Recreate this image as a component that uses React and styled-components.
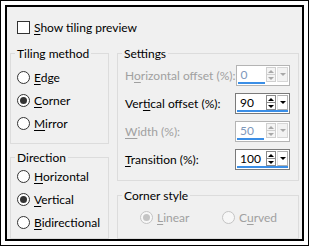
import React from "react";
import styled, { createGlobalStyle } from "styled-components";

const GlobalStyle = createGlobalStyle`
  body {
    margin: 0;
    background: #fff;
  }
`;

const Frame = styled.div`
  width: 309px;
  height: 246px;
  box-sizing: border-box;
  border: 1px solid #000;
  padding: 4px;
  background: #fff;
  font-family: Lato, "Noto Sans", sans-serif;
  font-size: 12px;
  color: #000;
`;

const Dialog = styled.div`
  height: 100%;
  box-sizing: border-box;
  border: 2px solid #000;
  background: #f0f0f0;
  padding: 14px 2px 0 3px;
  display: flex;
  flex-direction: column;
`;

const CheckRow = styled.label`
  display: flex;
  align-items: center;
  gap: 4px;
  height: 13px;
  padding-left: 7px;
  white-space: nowrap;
`;

const CheckBox = styled.span`
  width: 13px;
  height: 13px;
  box-sizing: border-box;
  border: 1px solid #333;
  background: #fff;
  flex: none;
`;

const Columns = styled.div`
  margin-top: 12px;
  display: grid;
  grid-template-columns: 99px 182px;
  column-gap: 8px;
  flex: 1;
`;

const Column = styled.div`
  display: flex;
  flex-direction: column;
  gap: ${(p) => p.$gap}px;
`;

const Group = styled.fieldset`
  margin: 0;
  padding: 0;
  min-width: 0;
  border: 1px solid #dcdcdc;
  box-sizing: border-box;
  height: ${(p) => (p.$h ? `${p.$h}px` : "auto")};
  flex: ${(p) => (p.$h ? "none" : 1)};
`;

const Legend = styled.legend`
  margin-left: 4px;
  padding: 0 2px;
  line-height: 15px;
  white-space: nowrap;
`;

const RadioList = styled.div`
  display: flex;
  flex-direction: column;
  padding: ${(p) => p.$pt}px 0 0 6px;
`;

const RadioRow = styled.label`
  display: flex;
  align-items: center;
  gap: 4px;
  height: 23px;
  white-space: nowrap;
  color: ${(p) => (p.$disabled ? "#a0a0a0" : "#000")};
`;

const RadioCircle = styled.span`
  width: 13px;
  height: 13px;
  box-sizing: border-box;
  border-radius: 50%;
  border: 1px solid ${(p) => (p.$disabled ? "#c4c4c4" : "#333")};
  background: ${(p) => (p.$disabled ? "#f7f7f7" : "#fff")};
  display: flex;
  align-items: center;
  justify-content: center;
  flex: none;

  &::after {
    content: "";
    display: ${(p) => (p.$checked ? "block" : "none")};
    width: 7px;
    height: 7px;
    border-radius: 50%;
    background: ${(p) => (p.$disabled ? "#c4c4c4" : "#333")};
  }
`;

const Key = styled.u`
  text-decoration-thickness: 1px;
  text-underline-offset: 2px;
`;

const SettingsBody = styled.div`
  display: flex;
  flex-direction: column;
  gap: 7px;
  padding: 4px 8px 0 7px;
`;

const SettingRow = styled.div`
  display: flex;
  align-items: center;
  justify-content: space-between;
  height: 21px;
  white-space: nowrap;
  color: ${(p) => (p.$disabled ? "#a0a0a0" : "#000")};
`;

const Spin = styled.div`
  width: 55px;
  height: 21px;
  box-sizing: border-box;
  border: 1px solid ${(p) => (p.$disabled ? "#b4b4b4" : "#7a7a7a")};
  background: #fff;
  display: flex;
  flex-direction: column;
`;

const SpinTop = styled.div`
  display: flex;
  height: 16px;
  padding-right: 1px;
`;

const SpinValue = styled.span`
  flex: 1;
  padding-left: 4px;
  line-height: 17px;
  color: ${(p) => (p.$disabled ? "#7d97bb" : "#000")};
`;

const Stepper = styled.div`
  width: 10px;
  display: flex;
  flex-direction: column;
  margin: 1px 1px 0 0;
`;

const StepHalf = styled.span`
  flex: 1;
  border: 1px solid ${(p) => (p.$disabled ? "#cfcfcf" : "#8a8a8a")};
  border-top-width: ${(p) => (p.$down ? 0 : 1)}px;
  background: ${(p) => (p.$disabled ? "#f4f4f4" : "#fff")};
  display: flex;
  align-items: center;
  justify-content: center;
`;

const Arrow = styled.span`
  width: 0;
  height: 0;
  border-left: 3px solid transparent;
  border-right: 3px solid transparent;
  ${(p) => (p.$up ? "border-bottom" : "border-top")}: 3px solid
    ${(p) => (p.$disabled ? "#a8a8a8" : "#000")};
`;

const DropButton = styled.div`
  width: 9px;
  margin-top: 1px;
  border: 1px solid ${(p) => (p.$disabled ? "#d6d6d6" : "#b0b0b0")};
  border-left-color: ${(p) => (p.$disabled ? "#e6e6e6" : "#e0e0e0")};
  background: ${(p) => (p.$disabled ? "#f2f2f2" : "#fff")};
  display: flex;
  align-items: center;
  justify-content: center;
`;

const Bar = styled.div`
  height: 3px;
  margin: 0 0 1px 1px;
  width: ${(p) => p.$w}px;
  background: #3a8ee6;
`;

const CornerRow = styled.div`
  display: grid;
  grid-template-columns: 82px auto;
  padding: 3px 0 0 22px;
`;

const Radio = ({ checked, disabled, children }) => (
  <RadioRow $disabled={disabled}>
    <RadioCircle $checked={checked} $disabled={disabled} />
    <span>{children}</span>
  </RadioRow>
);

const SpinBox = ({ value, disabled, bar }) => (
  <Spin $disabled={disabled}>
    <SpinTop>
      <SpinValue $disabled={disabled}>{value}</SpinValue>
      <Stepper>
        <StepHalf $disabled={disabled}>
          <Arrow $up $disabled={disabled} />
        </StepHalf>
        <StepHalf $down $disabled={disabled}>
          <Arrow $disabled={disabled} />
        </StepHalf>
      </Stepper>
      <DropButton $disabled={disabled}>
        <Arrow $disabled={disabled} />
      </DropButton>
    </SpinTop>
    <Bar $w={bar} />
  </Spin>
);

const settings = [
  { pre: "H", key: "o", post: "rizontal offset (%):", value: "0", disabled: true, bar: 27 },
  { pre: "Ver", key: "t", post: "ical offset (%):", value: "90", bar: 51 },
  { pre: "", key: "W", post: "idth (%):", value: "50", disabled: true, bar: 27 },
  { pre: "", key: "T", post: "ransition (%):", value: "100", bar: 51 },
];

export default function App() {
  return (
    <>
      <GlobalStyle />
      <Frame>
        <Dialog>
          <CheckRow>
            <CheckBox />
            <span>
              <Key>S</Key>how tiling preview
            </span>
          </CheckRow>
          <Columns>
            <Column $gap={6}>
              <Group $h={98}>
                <Legend>Tiling method</Legend>
                <RadioList $pt={5}>
                  <Radio>
                    <Key>E</Key>dge
                  </Radio>
                  <Radio checked>
                    <Key>C</Key>orner
                  </Radio>
                  <Radio>
                    <Key>M</Key>irror
                  </Radio>
                </RadioList>
              </Group>
              <Group>
                <Legend>Direction</Legend>
                <RadioList $pt={0}>
                  <Radio>
                    <Key>H</Key>orizontal
                  </Radio>
                  <Radio checked>
                    <Key>V</Key>ertical
                  </Radio>
                  <Radio>
                    <Key>B</Key>idirectional
                  </Radio>
                </RadioList>
              </Group>
            </Column>
            <Column $gap={7}>
              <Group $h={135}>
                <Legend>Settings</Legend>
                <SettingsBody>
                  {settings.map((s) => (
                    <SettingRow key={s.value} $disabled={s.disabled}>
                      <span>
                        {s.pre}
                        <Key>{s.key}</Key>
                        {s.post}
                      </span>
                      <SpinBox value={s.value} disabled={s.disabled} bar={s.bar} />
                    </SettingRow>
                  ))}
                </SettingsBody>
              </Group>
              <Group>
                <Legend>Corner style</Legend>
                <CornerRow>
                  <Radio checked disabled>
                    <Key>L</Key>inear
                  </Radio>
                  <Radio disabled>
                    C<Key>u</Key>rved
                  </Radio>
                </CornerRow>
              </Group>
            </Column>
          </Columns>
        </Dialog>
      </Frame>
    </>
  );
}
